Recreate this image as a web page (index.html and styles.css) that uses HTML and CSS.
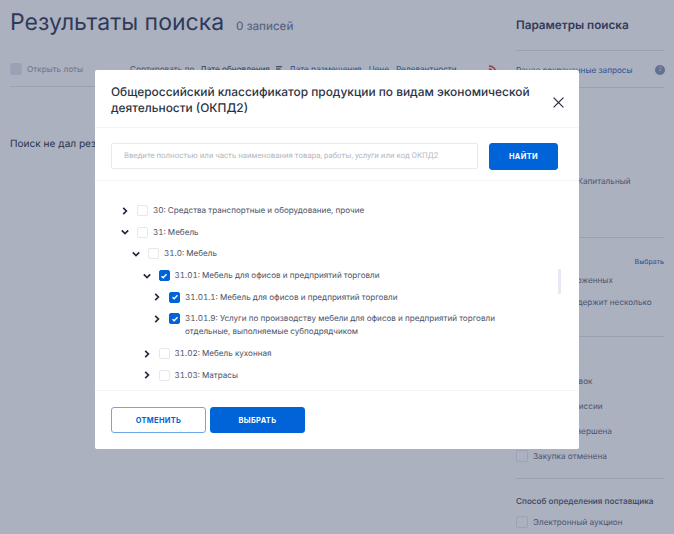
FILE: index.html
```html
<!DOCTYPE html>
<html lang="ru">

<head>
    <meta charset="UTF-8">
    <meta name="viewport" content="width=device-width, initial-scale=1.0">
    <title>Результаты поиска</title>
    <link rel="stylesheet" href="styles.css">
</head>

<body>
    <div class="page">
        <main class="results">
            <div class="results-head">
                <h1>Результаты поиска</h1>
                <span class="results-count">0 записей</span>
            </div>
            <div class="toolbar">
                <span class="box box-filled"></span>
                <span class="open-lots">Открыть лоты</span>
                <span class="sort-label">Сортировать по</span>
                <span class="sort-active">Дате обновления</span>
                <svg class="sort-icon" viewBox="0 0 6 6" width="6" height="6">
                    <path d="M0 .8h6M0 3h4.5M0 5.2h3" stroke="#232b3c" stroke-width="1.1" />
                </svg>
                <a class="sort-link">Дате размещения</a>
                <a class="sort-link">Цене</a>
                <a class="sort-link">Релевантности</a>
                <svg class="rss-icon" viewBox="0 0 10 10" width="9" height="9">
                    <path d="M1 1a8 8 0 0 1 8 8M1 4.5a4.500 4.500 0 0 1 4.500 4.500" fill="none" stroke="#d8412f" stroke-width="1.700" />
                </svg>
            </div>
            <p class="no-results">Поиск не дал результатов</p>
        </main>
        <aside class="params">
            <h2>Параметры поиска</h2>
            <div class="saved">
                <a>Ранее сохраненные запросы</a>
                <span class="badge">2</span>
            </div>
            <div class="section section-repair">
                <div class="check-row"><span class="box"></span>Текущий и Капитальный</div>
            </div>
            <div class="section section-lots">
                <a class="pick">Выбрать</a>
                <div class="check-row"><span class="box"></span>Только отложенных</div>
                <div class="check-row"><span class="box"></span>Закупка содержит несколько</div>
            </div>
            <div class="section section-stage">
                <div class="check-row"><span class="box"></span>Подача заявок</div>
                <div class="check-row"><span class="box"></span>Работа комиссии</div>
                <div class="check-row"><span class="box"></span>Закупка завершена</div>
                <div class="check-row"><span class="box"></span>Закупка отменена</div>
            </div>
            <div class="section section-method">
                <h3>Способ определения поставщика</h3>
                <div class="check-row"><span class="box"></span>Электронный аукцион</div>
            </div>
        </aside>
    </div>

    <div class="overlay">
        <div class="modal">
            <header class="modal-head">
                <h2>Общероссийский классификатор продукции по видам экономической деятельности (ОКПД2)</h2>
                <svg class="close-icon" viewBox="0 0 11 11" width="11" height="11">
                    <path d="M.6.6l9.800 9.800M10.400.6L.6 10.400" stroke="#232b3c" stroke-width="1.200" />
                </svg>
            </header>
            <div class="modal-search">
                <div class="search-input">Введите полностью или часть наименования товара, работы, услуги или код ОКПД2</div>
                <button class="btn btn-primary btn-find">НАЙТИ</button>
            </div>
            <div class="tree">
                <div class="tree-row level-0">
                    <svg class="chevron" viewBox="0 0 8 8" width="8" height="8"><path d="M2.200.8L5.400 4 2.200 7.200" /></svg>
                    <span class="box"></span>
                    <span class="tree-label">30: Средства транспортные и оборудование, прочие</span>
                </div>
                <div class="tree-row level-0">
                    <svg class="chevron" viewBox="0 0 8 8" width="8" height="8"><path d="M.8 2.400L4 5.600l3.200-3.200" /></svg>
                    <span class="box"></span>
                    <span class="tree-label">31: Мебель</span>
                </div>
                <div class="tree-row level-1">
                    <svg class="chevron" viewBox="0 0 8 8" width="8" height="8"><path d="M.8 2.400L4 5.600l3.200-3.200" /></svg>
                    <span class="box"></span>
                    <span class="tree-label">31.0: Мебель</span>
                </div>
                <div class="tree-row level-2">
                    <svg class="chevron" viewBox="0 0 8 8" width="8" height="8"><path d="M.8 2.400L4 5.600l3.200-3.200" /></svg>
                    <span class="box box-checked"><svg viewBox="0 0 8 8" width="8" height="8"><path d="M1.500 4.200l1.700 1.600 3.300-3.500" /></svg></span>
                    <span class="tree-label">31.01: Мебель для офисов и предприятий торговли</span>
                </div>
                <div class="tree-row level-3">
                    <svg class="chevron" viewBox="0 0 8 8" width="8" height="8"><path d="M2.200.8L5.400 4 2.200 7.200" /></svg>
                    <span class="box box-checked"><svg viewBox="0 0 8 8" width="8" height="8"><path d="M1.500 4.200l1.700 1.600 3.300-3.500" /></svg></span>
                    <span class="tree-label">31.01.1: Мебель для офисов и предприятий торговли</span>
                </div>
                <div class="tree-row level-3">
                    <svg class="chevron" viewBox="0 0 8 8" width="8" height="8"><path d="M2.200.8L5.400 4 2.200 7.200" /></svg>
                    <span class="box box-checked"><svg viewBox="0 0 8 8" width="8" height="8"><path d="M1.500 4.200l1.700 1.600 3.300-3.500" /></svg></span>
                    <span class="tree-label">31.01.9: Услуги по производству мебели для офисов и предприятий торговли отдельные, выполняемые субподрядчиком</span>
                </div>
                <div class="tree-row level-2">
                    <svg class="chevron" viewBox="0 0 8 8" width="8" height="8"><path d="M2.200.8L5.400 4 2.200 7.200" /></svg>
                    <span class="box"></span>
                    <span class="tree-label">31.02: Мебель кухонная</span>
                </div>
                <div class="tree-row level-2">
                    <svg class="chevron" viewBox="0 0 8 8" width="8" height="8"><path d="M2.200.8L5.400 4 2.200 7.200" /></svg>
                    <span class="box"></span>
                    <span class="tree-label">31.03: Матрасы</span>
                </div>
                <div class="scroll-thumb"></div>
            </div>
            <footer class="modal-foot">
                <button class="btn btn-outline">ОТМЕНИТЬ</button>
                <button class="btn btn-primary">ВЫБРАТЬ</button>
            </footer>
        </div>
    </div>
</body>

</html>
```

FILE: styles.css
```css
* {
    box-sizing: border-box;
}

html,
body {
    margin: 0;
    padding: 0;
    height: 534px;
    overflow: hidden;
}

body {
    position: relative;
    background-color: #fff;
    color: #232b3c;
    font-family: Inter, "Noto Sans", sans-serif;
    font-size: 8.2px;
    text-rendering: geometricPrecision;
}

h1,
h2,
h3,
p {
    margin: 0;
}

.page {
    display: flex;
    height: 534px;
    padding-left: 10px;
}

/* results column */
.results {
    width: 506px;
    flex: none;
}

.results-head {
    display: flex;
    align-items: baseline;
    height: 50px;
    padding-top: 5px;
}

.results-head h1 {
    font-size: 23px;
    font-weight: 400;
    line-height: 34px;
    color: #2f3a58;
}

.results-count {
    margin-left: 12px;
    font-size: 11.600px;
    font-weight: 500;
    color: #75839d;
}

.toolbar {
    display: flex;
    align-items: center;
    height: 37px;
    padding-top: 2px;
    margin-right: 10px;
    border-bottom: 1px solid #e2e5ec;
    color: #323c54;
    white-space: nowrap;
}

.open-lots {
    margin-left: 5px;
    width: 103px;
    color: #8f97a8;
}

.sort-label {
    width: 70px;
    color: #5c6579;
}

.sort-active {
    width: 76px;
}

.sort-icon {
    margin-right: 7px;
}

.sort-link {
    margin-right: 7px;
    color: #1d5fb8;
}

.rss-icon {
    margin-left: 24px;
}

.no-results {
    margin-top: 50px;
    font-size: 10.100px;
    line-height: 14px;
}

/* search params */
.params {
    width: 148px;
    flex: none;
    color: #5c6579;
}

.params h2 {
    height: 51px;
    padding-top: 17px;
    border-bottom: 1px solid #e2e5ec;
    font-size: 11.700px;
    font-weight: 600;
    line-height: 16px;
    color: #2f3a58;
}

.saved {
    display: flex;
    justify-content: space-between;
    align-items: center;
    height: 37px;
    padding-top: 2px;
    border-bottom: 1px solid #e2e5ec;
    color: #1d5fb8;
}

.badge {
    width: 10px;
    height: 10px;
    margin-right: -1px;
    border-radius: 50%;
    background-color: #8593b0;
    color: #d5dae6;
    font-size: 6px;
    line-height: 10px;
    text-align: center;
}

.section {
    border-bottom: 1px solid #e2e5ec;
}

.section-repair {
    height: 150px;
    padding-top: 86px;
}

.section-lots {
    height: 99px;
    padding-top: 19px;
}

.section-lots .pick {
    margin-bottom: 6px;
}

.section-lots .check-row {
    margin-bottom: 8px;
}

.section-stage {
    height: 142px;
    padding-top: 37px;
}

.section-method {
    padding-top: 15px;
    border-bottom: none;
}

.pick {
    display: block;
    font-size: 7px;
    line-height: 10px;
    text-align: right;
    color: #1d5fb8;
}

.section h3 {
    margin-bottom: 7px;
    font-size: 8.200px;
    font-weight: 500;
    line-height: 14px;
    color: #3f4860;
}

.check-row {
    display: flex;
    align-items: center;
    gap: 5px;
    height: 14px;
    margin-bottom: 11px;
    white-space: nowrap;
}

.box {
    display: inline-flex;
    align-items: center;
    justify-content: center;
    flex: none;
    width: 12px;
    height: 12px;
    border: 1px solid #e6e8ee;
    border-radius: 2px;
    background-color: #fff;
}

.box-filled {
    background-color: #e3e6ec;
}

.box-checked {
    border-color: #0063d8;
    background-color: #0063d8;
}

.box-checked path {
    fill: none;
    stroke: #fff;
    stroke-width: 1.400;
}

/* dialog */
.overlay {
    position: absolute;
    top: 0;
    right: 0;
    bottom: 0;
    left: 0;
    display: flex;
    justify-content: center;
    align-items: flex-start;
    padding-top: 70px;
    background-color: rgba(47, 60, 95, 0.4);
}

.modal {
    width: 484px;
    height: 379px;
    border-radius: 2px;
    background-color: #fff;
    display: flex;
    flex-direction: column;
}

.modal-head {
    position: relative;
    height: 58px;
    padding: 14px 40px 0 16px;
    border-bottom: 1px solid #f3f4f7;
}

.modal-head h2 {
    font-size: 11.900px;
    font-weight: 500;
    line-height: 16px;
    color: #2a3246;
}

.close-icon {
    position: absolute;
    top: 27px;
    right: 15px;
}

.modal-search {
    display: flex;
    gap: 11px;
    height: 53px;
    padding: 15px 21px 0 16px;
    border-bottom: 1px solid #f3f4f7;
}

.search-input {
    flex: 1;
    height: 26px;
    padding-left: 12px;
    border: 1px solid #e8eaf1;
    border-radius: 2px;
    font-family: Roboto, sans-serif;
    font-size: 7.900px;
    line-height: 24px;
    color: #b4b7be;
}

.btn {
    height: 26px;
    width: 95px;
    padding: 0;
    border: 1px solid #0063d8;
    border-radius: 3px;
    font-family: Inter, sans-serif;
    font-size: 7.400px;
    font-weight: 700;
    letter-spacing: 0.35px;
}

.btn-primary {
    background-color: #0063d8;
    color: #fff;
}

.btn-outline {
    background-color: #fff;
    color: #0063d8;
    border-color: #6ea6e8;
}

.btn-find {
    width: 69px;
    height: 27px;
    flex: none;
}

.tree {
    position: relative;
    height: 210px;
    padding-top: 23px;
    border-bottom: 1px solid #f3f4f7;
    overflow: hidden;
}

.tree-row {
    display: flex;
    align-items: flex-start;
    margin-bottom: 8.700px;
    font-size: 8.100px;
    font-variant-numeric: tabular-nums;
    line-height: 13px;
    color: #4a5266;
}

.tree-row .box {
    width: 11px;
    height: 11px;
    margin-top: 1px;
}

.level-0 {
    padding-left: 26px;
}

.level-1 {
    padding-left: 37px;
}

.level-2 {
    padding-left: 47.500px;
}

.level-3 {
    padding-left: 58px;
}

.chevron {
    flex: none;
    margin-top: 2.500px;
    margin-right: 8px;
}

.chevron path {
    fill: none;
    stroke: #232b3c;
    stroke-width: 1.700;
}

.tree-label {
    margin-left: 5px;
    width: 340px;
}

.scroll-thumb {
    position: absolute;
    top: 88px;
    left: 463px;
    width: 3px;
    height: 25px;
    background-color: #e6eaf3;
}

.modal-foot {
    display: flex;
    gap: 4px;
    padding: 16px 16px 0;
}
```
